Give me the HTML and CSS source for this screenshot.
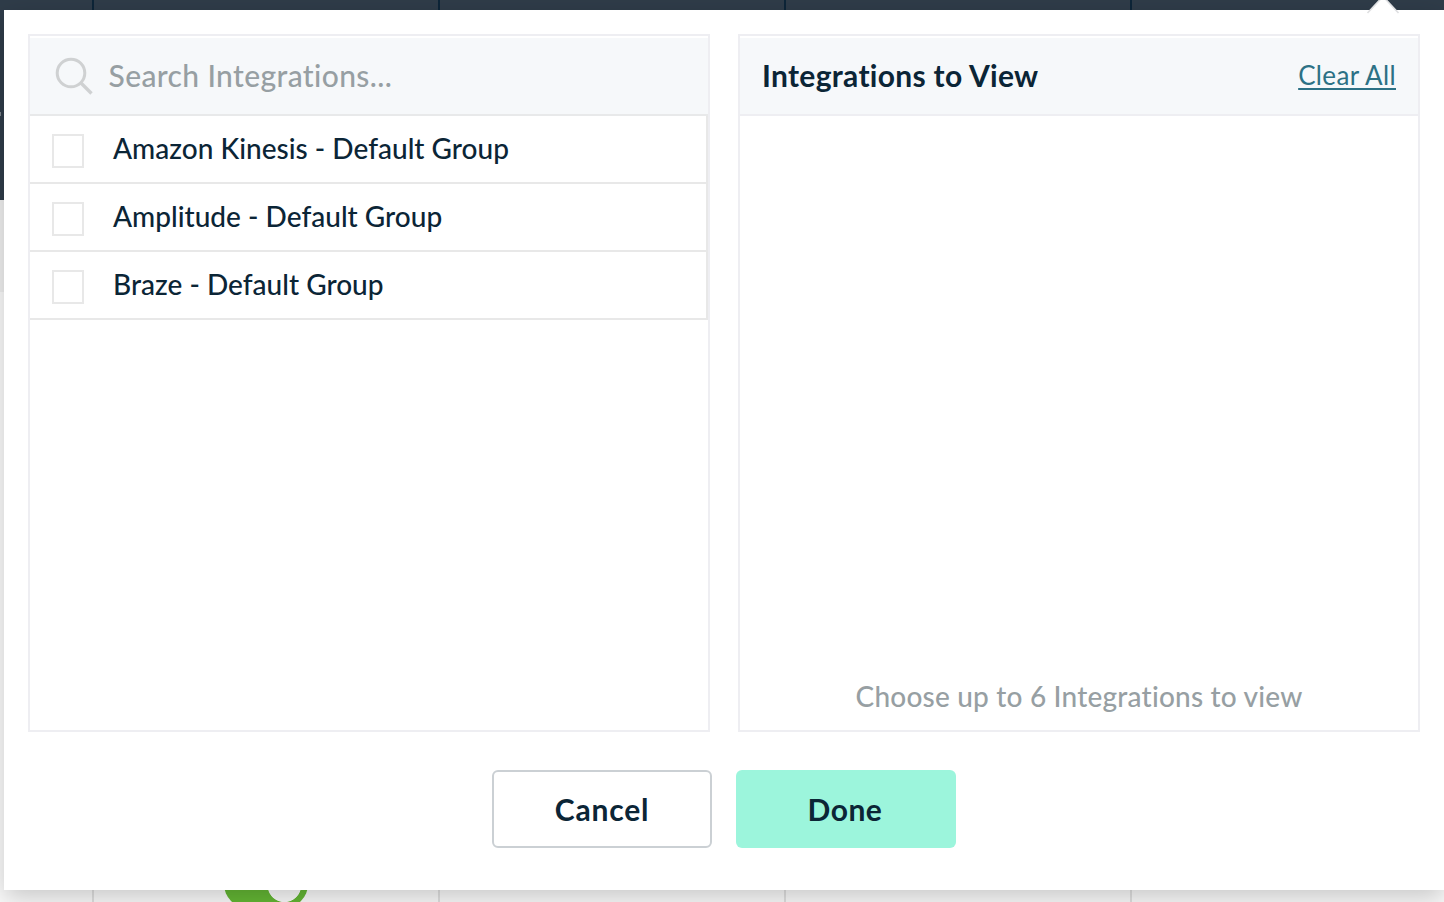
FILE: index.html
```html
<!DOCTYPE html>
<html lang="en">
<head>
<meta charset="utf-8">
<title>Integrations</title>
<link rel="stylesheet" href="styles.css">
</head>
<body>
<div class="page">
  <div class="backdrop" aria-hidden="true">
    <div class="grid-head"><i></i><i></i><i></i><i></i><i></i></div>
    <div class="grid-band"></div>
    <div class="grid-body"><i></i><i><span class="toggle"></span></i><i></i><i></i><i></i></div>
  </div>
  <span class="speck"></span>
  <div class="modal">
    <svg class="arrow" width="36" height="14" viewBox="0 0 36 14"><path d="M2.500 13 18-3.500 33.500 13" fill="#fff" stroke="#dfe0e2" stroke-width="1.600"/></svg>
    <div class="panels">
      <section class="panel">
        <div class="panel-head search">
          <svg class="search-icon" width="40" height="40" viewBox="0 0 40 40" fill="none" stroke="#cfd1d2" stroke-width="3"><circle cx="17" cy="17" r="13.800"/><path d="M27 27 37.500 37.500" stroke-width="3.400"/></svg>
          <span class="placeholder">Search Integrations...</span>
        </div>
        <ul class="options">
          <li><span class="box"></span><span class="label">Amazon Kinesis - Default Group</span></li>
          <li><span class="box"></span><span class="label">Amplitude - Default Group</span></li>
          <li><span class="box"></span><span class="label">Braze - Default Group</span></li>
        </ul>
      </section>
      <section class="panel">
        <div class="panel-head selected">
          <h2>Integrations to View</h2>
          <a class="clear">Clear All</a>
        </div>
        <p class="hint">Choose up to 6 Integrations to view</p>
      </section>
    </div>
    <div class="actions">
      <button class="btn cancel"><span>Cancel</span></button>
      <button class="btn done"><span>Done</span></button>
    </div>
  </div>
</div>
</body>
</html>
```
FILE: styles.css
```css
* { box-sizing: border-box; }
body { margin: 0; font-family: Lato, "Open Sans", sans-serif; font-variant-ligatures: none; color: #0b2536; }
.page { position: relative; width: 1444px; height: 902px; overflow: hidden; }
.backdrop { height: 902px; display: flex; flex-direction: column; background: #fafafa; }
.backdrop i { border-right: 2px solid #e0e0e0; }
.backdrop i:last-child { border-right: 0; }
.grid-head, .grid-body { display: grid; grid-template-columns: 94px 346px 346px 346px 1fr; }
.backdrop .grid-head i { border-color: #0d2538; }
.grid-head { height: 200px; background: #2f3c49; }
.grid-band { height: 92px; background: #efefef; }
.grid-body { flex: 1; min-height: 0; }
.grid-body i { display: flex; align-items: flex-end; }
.toggle { width: 84px; height: 48px; margin: 0 0 -6px 130px; border-radius: 24px; background: radial-gradient(circle at 60.400px 25.300px, #fafafa 16.400px, #64b734 17.200px); }
.speck { position: absolute; left: 0; top: 112px; width: 1px; height: 4px; background: #7c858d; }
.modal { position: absolute; left: 4px; top: 10px; width: 1440px; height: 880px; padding: 24px; background: #fff; box-shadow: 0 8px 24px rgba(0,0,0,.2); }
.arrow { position: absolute; left: 1361px; top: -10px; }
.panels { display: grid; grid-template-columns: 682px 682px; gap: 28px; height: 698px; }
.panel { display: flex; flex-direction: column; border: 2px solid #eeeef2; }
.panel-head { display: flex; align-items: center; height: 80px; border-top: 2px solid #fff; border-bottom: 2px solid #e8e9ea; background: #f6f8fa; }
.search { padding-left: 24px; }
.search-icon { margin-right: 14.5px; }
.placeholder { padding-bottom: 2px; font-size: 30px; font-weight: 500; color: #979fa3; letter-spacing: .38px; }
.options { width: 678px; margin: 0; padding: 0; list-style: none; }
.options li { display: flex; align-items: center; height: 68px; padding-left: 22px; border: solid #e8e8e8; border-width: 0 2px 2px 0; }
.box { width: 32px; height: 34px; margin: 4px 29px 0 0; border: 2px solid #e8e8e8; }
.label { padding-bottom: 2px; font-size: 28px; font-weight: 500; letter-spacing: .02px; }
.selected { justify-content: space-between; padding: 0 22px 2px; border-bottom-color: #eeeef2; }
h2 { margin: 0; font-size: 30px; font-weight: 700; letter-spacing: .3px; }
.clear { font-size: 26px; letter-spacing: .35px; color: #2c7185; text-decoration: underline; text-decoration-thickness: 2px; text-underline-offset: 3px; }
.hint { margin: auto 0 17px; text-align: center; font-size: 28px; font-weight: 500; line-height: 34px; letter-spacing: .2px; color: #979fa3; }
.actions { display: flex; justify-content: center; gap: 24px; padding-top: 38px; }
.btn { width: 220px; height: 78px; border: 0; border-radius: 6px; font: 700 30px Lato, "Open Sans", sans-serif; letter-spacing: .8px; color: #0b2536; }
.cancel { border: 2px solid #cbd0d4; background: #fff; }
.done { letter-spacing: .5px; padding-right: 8px; background: #9cf5dc; }
```
